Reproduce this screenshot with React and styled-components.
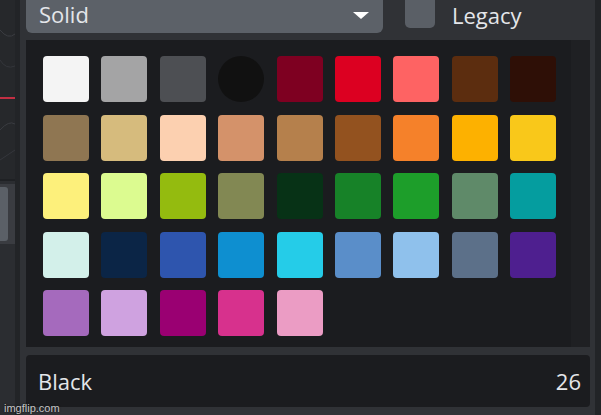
import React from "react";
import styled, { createGlobalStyle } from "styled-components";

const GlobalStyle = createGlobalStyle`
  html, body {
    margin: 0;
    padding: 0;
    background: #25272a;
    overflow: hidden;
  }
  * {
    box-sizing: border-box;
  }
`;

const SWATCHES = [
  "#f4f4f4", "#a4a4a5", "#4d4f53", "#111111", "#7e0021", "#dc0021", "#fe6363", "#5c2d0f", "#2e0f06",
  "#8f7652", "#d6bb7d", "#fcd0b0", "#d4926a", "#b5804c", "#93521f", "#f5812a", "#fdb100", "#f9c81a",
  "#fdf07b", "#dcfb90", "#94bb0f", "#828853", "#073216", "#178228", "#1d9e2a", "#5f8a69", "#059d9f",
  "#d3f0ea", "#0b2546", "#2e55ae", "#0e8fd0", "#25cce8", "#5a8ec9", "#8fc1ec", "#5c7089", "#4e1f8f",
  "#a56abd", "#cfa2e0", "#9a0072", "#d7318d", "#eb9cc4",
];

const Screen = styled.div`
  position: relative;
  width: 601px;
  height: 415px;
  display: flex;
  font-family: "Open Sans", "Liberation Sans", sans-serif;
  color: #e4e6ea;
  overflow: hidden;
`;

const SidePanel = styled.div`
  width: 15px;
  display: flex;
  flex-direction: column;
  background: #2b2d31;
`;

const Canvas = styled.div`
  height: 181px;
  background: #26282b;
  border-bottom: 2px solid #1f2124;
`;

const ToolBox = styled.div`
  margin-top: 3px;
  height: 60px;
  background: #3a3c41;
  padding: 3px 7px 3px 0;
`;

const ToolKnob = styled.div`
  height: 100%;
  background: #5b6067;
  border-radius: 0 3px 3px 0;
`;

const Gutter = styled.div`
  width: ${({ $w }) => $w}px;
  background: #222427;
`;

const Main = styled.div`
  flex: 1;
  display: flex;
  flex-direction: column;
  background: #303236;
  padding: 0 5px 8px 6px;
`;

const TopBar = styled.div`
  height: 40px;
  display: flex;
  align-items: flex-start;
`;

const Select = styled.div`
  width: 357px;
  height: 33px;
  background: #5c6168;
  border-radius: 0 0 6px 6px;
  display: flex;
  align-items: center;
  justify-content: space-between;
  padding: 0 14px 5px 13px;
  font-size: 22px;
`;

const Caret = styled.div`
  width: 0;
  height: 0;
  border-left: 8px solid transparent;
  border-right: 8px solid transparent;
  border-top: 7px solid #ffffff;
  margin-top: 2px;
`;

const Check = styled.label`
  margin-left: 22px;
  display: flex;
  align-items: flex-start;
  gap: 17px;
  font-size: 22px;
`;

const Box = styled.span`
  width: 30px;
  height: 28px;
  background: #5a5f66;
  border-radius: 0 0 5px 5px;
`;

const CheckText = styled.span`
  display: block;
  line-height: 30px;
`;

const GridArea = styled.div`
  height: 307px;
  display: flex;
  background: #1b1c1f;
`;

const Grid = styled.div`
  flex: 1;
  display: grid;
  grid-template-columns: repeat(9, 46px);
  grid-auto-rows: 46px;
  column-gap: 12.4px;
  row-gap: 12.6px;
  padding: 16px 0 0 17px;
  align-content: start;
`;

const Swatch = styled.div`
  background: ${({ $color }) => $color};
  border-radius: ${({ $selected }) => ($selected ? "50%" : "4px")};
`;

const ScrollTrack = styled.div`
  width: 19px;
  background: #1f2023;
`;

const Footer = styled.div`
  margin-top: 8px;
  height: 52px;
  background: #1b1c1f;
  border-radius: 4px;
  display: flex;
  align-items: center;
  justify-content: space-between;
  padding: 0 9px 0 12px;
  font-size: 22px;
`;

const Watermark = styled.div`
  position: absolute;
  left: 4px;
  bottom: 1px;
  font-family: "Liberation Sans", Arial, sans-serif;
  font-size: 11px;
  color: rgba(255, 255, 255, 0.75);
  text-shadow: 0 0 2px rgba(0, 0, 0, 0.8);
`;

const CanvasLines = () => (
  <svg width="15" height="181" viewBox="0 0 15 181">
    <path d="M0 30 Q8 40 15 34" stroke="#3b3d42" strokeWidth="1" fill="none" />
    <path d="M0 60 Q6 70 15 66" stroke="#34363b" strokeWidth="1" fill="none" />
    <path d="M0 130 Q9 120 15 124" stroke="#3a3c41" strokeWidth="1" fill="none" />
    <path d="M0 160 L15 150" stroke="#35373c" strokeWidth="1" fill="none" />
    <rect x="0" y="97" width="15" height="2" fill="#c22f43" />
  </svg>
);

export default function App() {
  return (
    <>
      <GlobalStyle />
      <Screen>
        <SidePanel>
          <Canvas>
            <CanvasLines />
          </Canvas>
          <ToolBox>
            <ToolKnob />
          </ToolBox>
        </SidePanel>
        <Gutter $w={5} />
        <Main>
          <TopBar>
            <Select>
              <span>Solid</span>
              <Caret />
            </Select>
            <Check>
              <Box />
              <CheckText>Legacy</CheckText>
            </Check>
          </TopBar>
          <GridArea>
            <Grid>
              {SWATCHES.map((c, i) => (
                <Swatch key={i} $color={c} $selected={i === 3} />
              ))}
            </Grid>
            <ScrollTrack />
          </GridArea>
          <Footer>
            <span>Black</span>
            <span>26</span>
          </Footer>
        </Main>
        <Gutter $w={6} />
        <Watermark>imgflip.com</Watermark>
      </Screen>
    </>
  );
}
